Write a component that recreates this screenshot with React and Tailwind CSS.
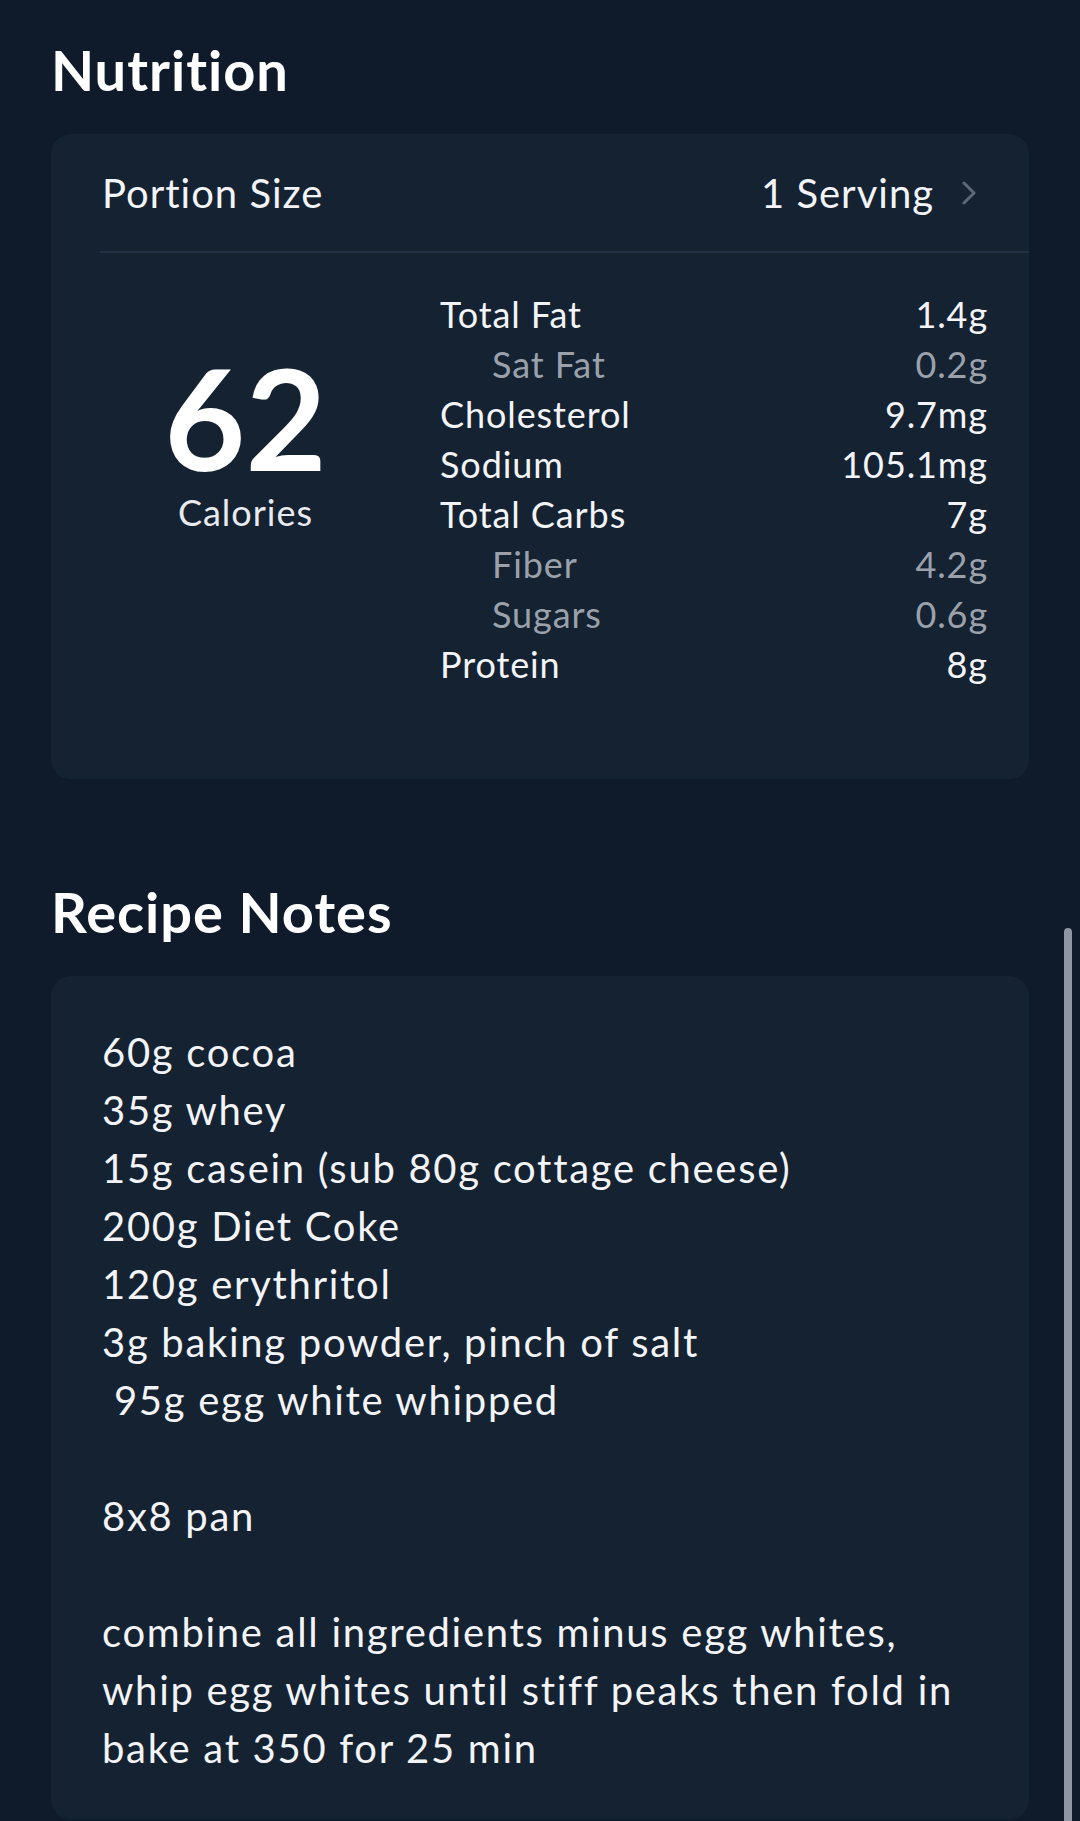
import React from "react";

const nutrients = [
  { label: "Total Fat", value: "1.4g" },
  { label: "Sat Fat", value: "0.2g", sub: true },
  { label: "Cholesterol", value: "9.7mg" },
  { label: "Sodium", value: "105.1mg" },
  { label: "Total Carbs", value: "7g" },
  { label: "Fiber", value: "4.2g", sub: true },
  { label: "Sugars", value: "0.6g", sub: true },
  { label: "Protein", value: "8g" },
];

const notes = [
  "60g cocoa",
  "35g whey",
  "15g casein (sub 80g cottage cheese)",
  "200g Diet Coke",
  "120g erythritol",
  "3g baking powder, pinch of salt",
  " 95g egg white whipped",
  "",
  "8x8 pan",
  "",
  "combine all ingredients minus egg whites,",
  "whip egg whites until stiff peaks then fold in",
  "bake at 350 for 25 min",
];

const ChevronRight = () => (
  <svg width="14" height="24" viewBox="0 0 14 24" fill="none">
    <path d="M2 2l10 10-10 10" stroke="#5c6878" strokeWidth="3" strokeLinecap="round" strokeLinejoin="round" />
  </svg>
);

const NutritionCard = () => (
  <div className="mt-[36px] rounded-[20px] bg-[#152232]">
    <div className="flex h-[117px] items-center justify-between pl-[51px] pr-[53px] text-[40px] tracking-[1px] text-[#f2f4f7]">
      <span>Portion Size</span>
      <div className="flex items-center gap-[28px]">
        <span>1 Serving</span>
        <ChevronRight />
      </div>
    </div>
    <div className="ml-[49px] h-[2px] bg-[#243144]" />
    <div className="flex pt-[36px] pb-[90px] pr-[41px]">
      <div className="flex w-[389px] flex-col items-center">
        <div className="mt-[58px] text-[140px] font-bold leading-none text-white">62</div>
        <div className="mt-[7px] text-[36px] leading-none tracking-[1px] text-[#e8eaee]">Calories</div>
      </div>
      <div className="flex-1 text-[36px] leading-[50px] tracking-[0.9px]">
        {nutrients.map((n) => (
          <div key={n.label} className="flex justify-between">
            <span className={n.sub ? "pl-[52px] text-[#9aa1ab]" : "text-[#f2f4f7]"}>{n.label}</span>
            <span className={n.sub ? "text-[#9aa1ab]" : "text-[#f2f4f7]"}>{n.value}</span>
          </div>
        ))}
      </div>
    </div>
  </div>
);

const NotesCard = () => (
  <div className="mt-[36px] rounded-[20px] bg-[#152232] px-[51px] pt-[47px] pb-[42px] text-[40px] leading-[58px] tracking-[1.7px] text-[#f2f4f7]">
    {notes.map((line, i) => (
      <div key={i} className="h-[58px] whitespace-pre">
        {line}
      </div>
    ))}
  </div>
);

export default function App() {
  return (
    <div
      className="relative h-[1821px] w-[1080px] overflow-hidden bg-[#0f1a2a] px-[51px] pt-[42px]"
      style={{ fontFamily: "Lato, 'Noto Sans', sans-serif" }}
    >
      <h1 className="text-[56px] font-bold leading-none tracking-[1px] text-white">Nutrition</h1>
      <NutritionCard />
      <h1 className="mt-[105px] text-[56px] font-bold leading-none tracking-[1px] text-white">Recipe Notes</h1>
      <NotesCard />
      <div className="absolute right-[8px] top-[928px] h-[900px] w-[8px] rounded-full bg-[#8f97a2]" />
    </div>
  );
}
